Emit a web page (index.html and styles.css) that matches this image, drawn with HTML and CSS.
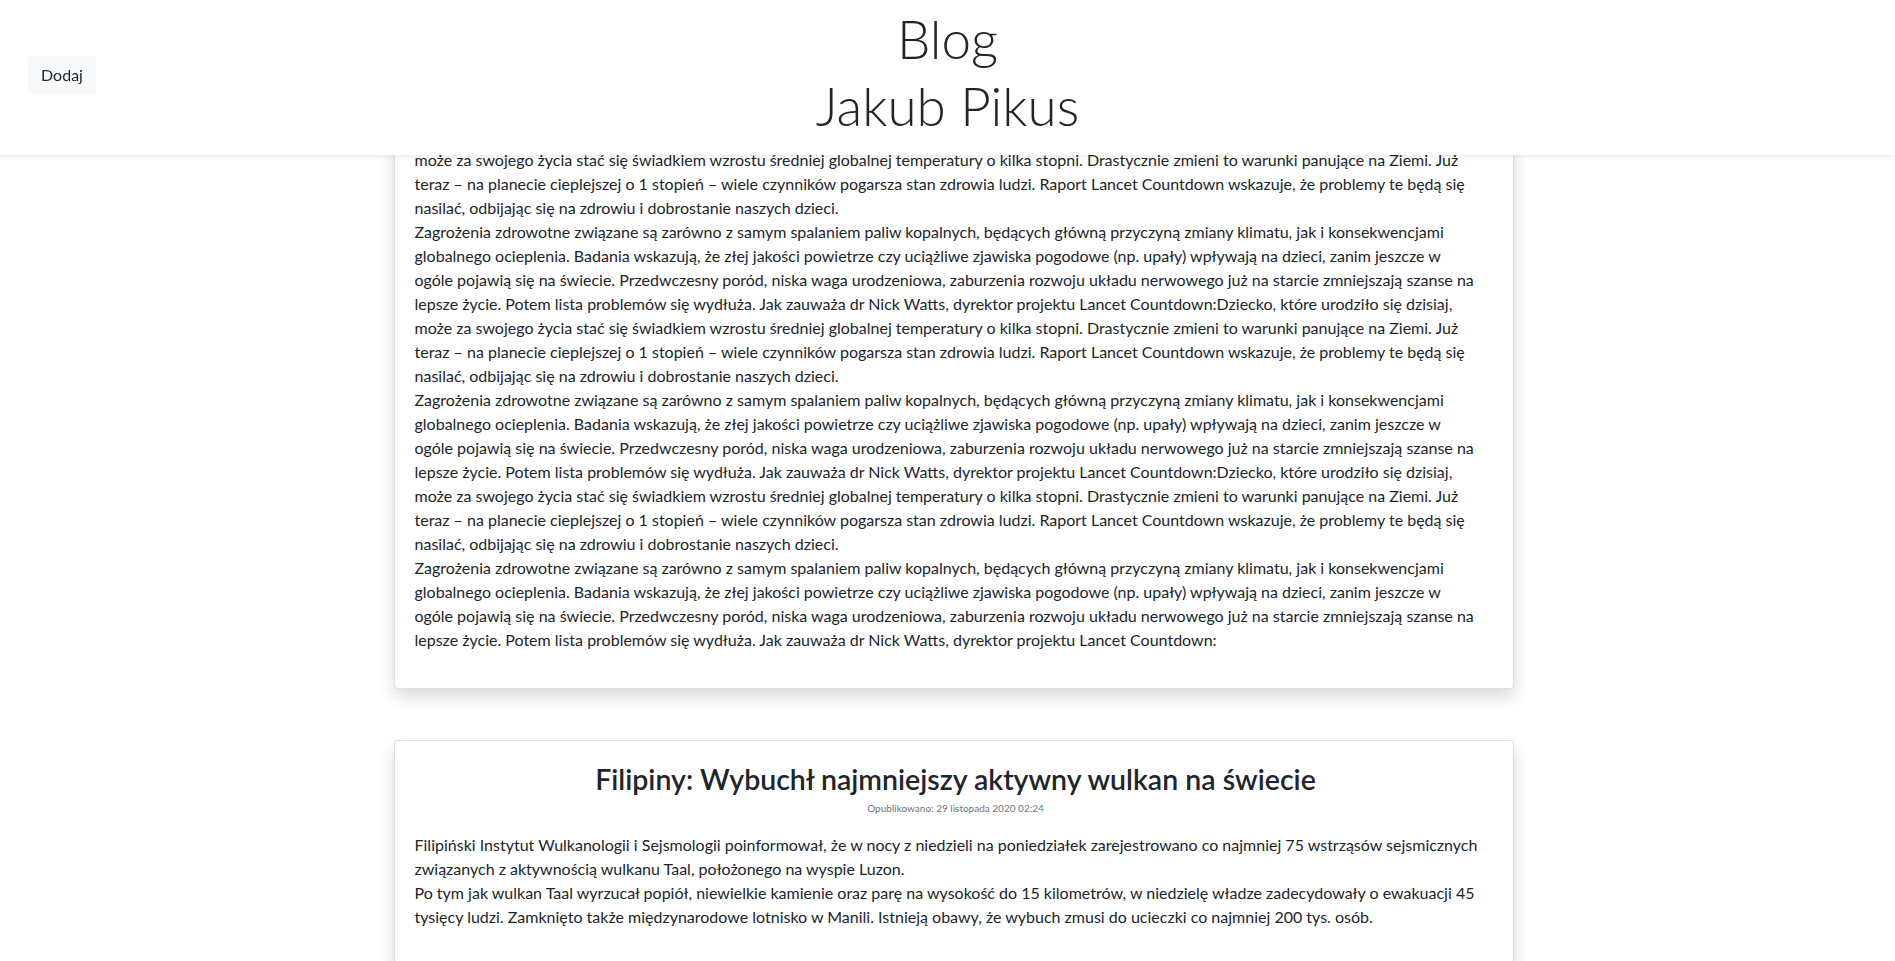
FILE: index.html
```html
<!DOCTYPE html>
<html lang="pl">
<head>
<meta charset="utf-8">
<title>Blog Jakub Pikus</title>
<link rel="stylesheet" href="styles.css">
</head>
<body>
<header class="topbar">
  <div class="topbar-left">
    <button class="btn-light" type="button">Dodaj</button>
  </div>
  <h1 class="site-title">Blog<br>Jakub Pikus</h1>
  <div class="topbar-right"></div>
</header>

<main class="feed">
  <article class="post">
    <p class="post-body">może za swojego życia stać się świadkiem wzrostu średniej globalnej temperatury o kilka stopni. Drastycznie zmieni to warunki panujące na Ziemi. Już<br>teraz – na planecie cieplejszej o 1 stopień – wiele czynników pogarsza stan zdrowia ludzi. Raport Lancet Countdown wskazuje, że problemy te będą się<br>nasilać, odbijając się na zdrowiu i dobrostanie naszych dzieci.<br>Zagrożenia zdrowotne związane są zarówno z samym spalaniem paliw kopalnych, będących główną przyczyną zmiany klimatu, jak i konsekwencjami<br>globalnego ocieplenia. Badania wskazują, że złej jakości powietrze czy uciążliwe zjawiska pogodowe (np. upały) wpływają na dzieci, zanim jeszcze w<br>ogóle pojawią się na świecie. Przedwczesny poród, niska waga urodzeniowa, zaburzenia rozwoju układu nerwowego już na starcie zmniejszają szanse na<br>lepsze życie. Potem lista problemów się wydłuża. Jak zauważa dr Nick Watts, dyrektor projektu Lancet Countdown:Dziecko, które urodziło się dzisiaj,<br>może za swojego życia stać się świadkiem wzrostu średniej globalnej temperatury o kilka stopni. Drastycznie zmieni to warunki panujące na Ziemi. Już<br>teraz – na planecie cieplejszej o 1 stopień – wiele czynników pogarsza stan zdrowia ludzi. Raport Lancet Countdown wskazuje, że problemy te będą się<br>nasilać, odbijając się na zdrowiu i dobrostanie naszych dzieci.<br>Zagrożenia zdrowotne związane są zarówno z samym spalaniem paliw kopalnych, będących główną przyczyną zmiany klimatu, jak i konsekwencjami<br>globalnego ocieplenia. Badania wskazują, że złej jakości powietrze czy uciążliwe zjawiska pogodowe (np. upały) wpływają na dzieci, zanim jeszcze w<br>ogóle pojawią się na świecie. Przedwczesny poród, niska waga urodzeniowa, zaburzenia rozwoju układu nerwowego już na starcie zmniejszają szanse na<br>lepsze życie. Potem lista problemów się wydłuża. Jak zauważa dr Nick Watts, dyrektor projektu Lancet Countdown:Dziecko, które urodziło się dzisiaj,<br>może za swojego życia stać się świadkiem wzrostu średniej globalnej temperatury o kilka stopni. Drastycznie zmieni to warunki panujące na Ziemi. Już<br>teraz – na planecie cieplejszej o 1 stopień – wiele czynników pogarsza stan zdrowia ludzi. Raport Lancet Countdown wskazuje, że problemy te będą się<br>nasilać, odbijając się na zdrowiu i dobrostanie naszych dzieci.<br>Zagrożenia zdrowotne związane są zarówno z samym spalaniem paliw kopalnych, będących główną przyczyną zmiany klimatu, jak i konsekwencjami<br>globalnego ocieplenia. Badania wskazują, że złej jakości powietrze czy uciążliwe zjawiska pogodowe (np. upały) wpływają na dzieci, zanim jeszcze w<br>ogóle pojawią się na świecie. Przedwczesny poród, niska waga urodzeniowa, zaburzenia rozwoju układu nerwowego już na starcie zmniejszają szanse na<br>lepsze życie. Potem lista problemów się wydłuża. Jak zauważa dr Nick Watts, dyrektor projektu Lancet Countdown:</p>
  </article>

  <article class="post">
    <h2 class="post-title">Filipiny: Wybuchł najmniejszy aktywny wulkan na świecie</h2>
    <div class="post-date">Opublikowano: 29 listopada 2020 02:24</div>
    <p class="post-body">Filipiński Instytut Wulkanologii i Sejsmologii poinformował, że w nocy z niedzieli na poniedziałek zarejestrowano co najmniej 75 wstrząsów sejsmicznych<br>związanych z aktywnością wulkanu Taal, położonego na wyspie Luzon.<br>Po tym jak wulkan Taal wyrzucał popiół, niewielkie kamienie oraz parę na wysokość do 15 kilometrów, w niedzielę władze zadecydowały o ewakuacji 45<br>tysięcy ludzi. Zamknięto także międzynarodowe lotnisko w Manili. Istnieją obawy, że wybuch zmusi do ucieczki co najmniej 200 tys. osób.</p>
  </article>
</main>
</body>
</html>
```

FILE: styles.css
```css
* {
  box-sizing: border-box;
}

html, body {
  margin: 0;
  padding: 0;
  background: #ffffff;
  color: #212529;
  font-family: "Lato", "Open Sans", sans-serif;
  font-size: 16px;
  line-height: 24px;
}

.topbar {
  position: fixed;
  top: 0;
  left: 0;
  right: 0;
  z-index: 10;
  height: 155px;
  background: #ffffff;
  box-shadow: 0 2px 4px rgba(0, 0, 0, 0.075);
  display: grid;
  grid-template-columns: 1fr auto 1fr;
  align-items: center;
}

.topbar-left {
  padding-left: 28px;
  padding-bottom: 5px;
  display: flex;
  align-items: center;
}

.btn-light {
  font-family: inherit;
  font-size: 16px;
  line-height: 24px;
  color: #212529;
  background: #f8f9fa;
  border: 1px solid #f8f9fa;
  border-radius: 4px;
  padding: 6px 11px;
  width: 68px;
  height: 38px;
  cursor: pointer;
}

.site-title {
  margin: 0;
  padding-bottom: 12px;
  font-size: 53px;
  font-weight: 300;
  line-height: 67px;
  text-align: center;
  color: #212529;
}

.feed {
  width: 1120px;
  margin-left: calc(50% - 554px);
  padding-top: 127px;
  padding-bottom: 40px;
  display: flex;
  flex-direction: column;
  gap: 51px;
}

.post {
  background: #ffffff;
  border: 1px solid rgba(0, 0, 0, 0.125);
  border-radius: 4px;
  box-shadow: 0 8px 16px rgba(0, 0, 0, 0.15);
  padding: 20px 16px 20px 20px;
}

.post-body {
  margin: 0 0 16px;
  white-space: nowrap;
}

.post-title {
  margin: 0;
  font-size: 28.5px;
  font-weight: 600;
  line-height: 36px;
  text-align: center;
}

.post-date {
  margin-top: 4px;
  margin-bottom: 18px;
  font-size: 10px;
  line-height: 14px;
  color: #6c757d;
  text-align: center;
}
```
